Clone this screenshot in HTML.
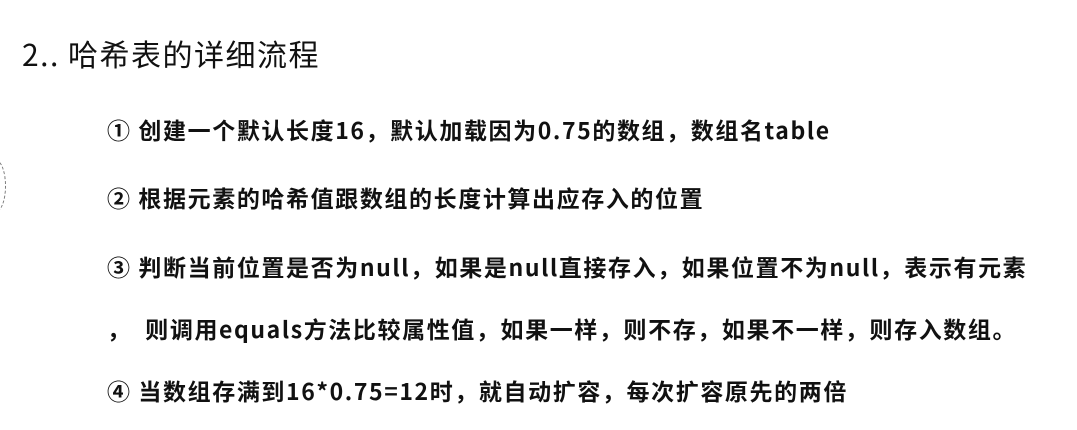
<!DOCTYPE html>
<html><head><meta charset="utf-8"><style>
body{margin:0;width:1077px;height:430px;background:#fff;overflow:hidden;position:relative;font-family:"Noto Sans CJK SC","Liberation Sans",sans-serif;color:#111}
.t{position:absolute;left:22px;top:33px;font-size:30px;white-space:nowrap;line-height:40px;letter-spacing:1.5px}
.l{position:absolute;left:107px;font-size:23px;font-weight:bold;white-space:nowrap;line-height:30px;letter-spacing:1.6px}
.arc{position:absolute;left:-14px;top:160px;width:18px;height:50px;border:1px dashed #777;border-radius:50%}
</style></head><body>
<div class="t">2.. 哈希表的详细流程</div>
<div class="arc"></div>
<div class="l" style="top:114px">① 创建一个默认长度16，默认加载因为0.75的数组，数组名table</div>
<div class="l" style="top:182px">② 根据元素的哈希值跟数组的长度计算出应存入的位置</div>
<div class="l" style="top:251px">③ 判断当前位置是否为null，如果是null直接存入，如果位置不为null，表示有元素</div>
<div class="l" style="top:313px">，&nbsp; 则调用equals方法比较属性值，如果一样，则不存，如果不一样，则存入数组。</div>
<div class="l" style="top:375px">④ 当数组存满到16*0.75=12时，就自动扩容，每次扩容原先的两倍</div>
</body></html>
